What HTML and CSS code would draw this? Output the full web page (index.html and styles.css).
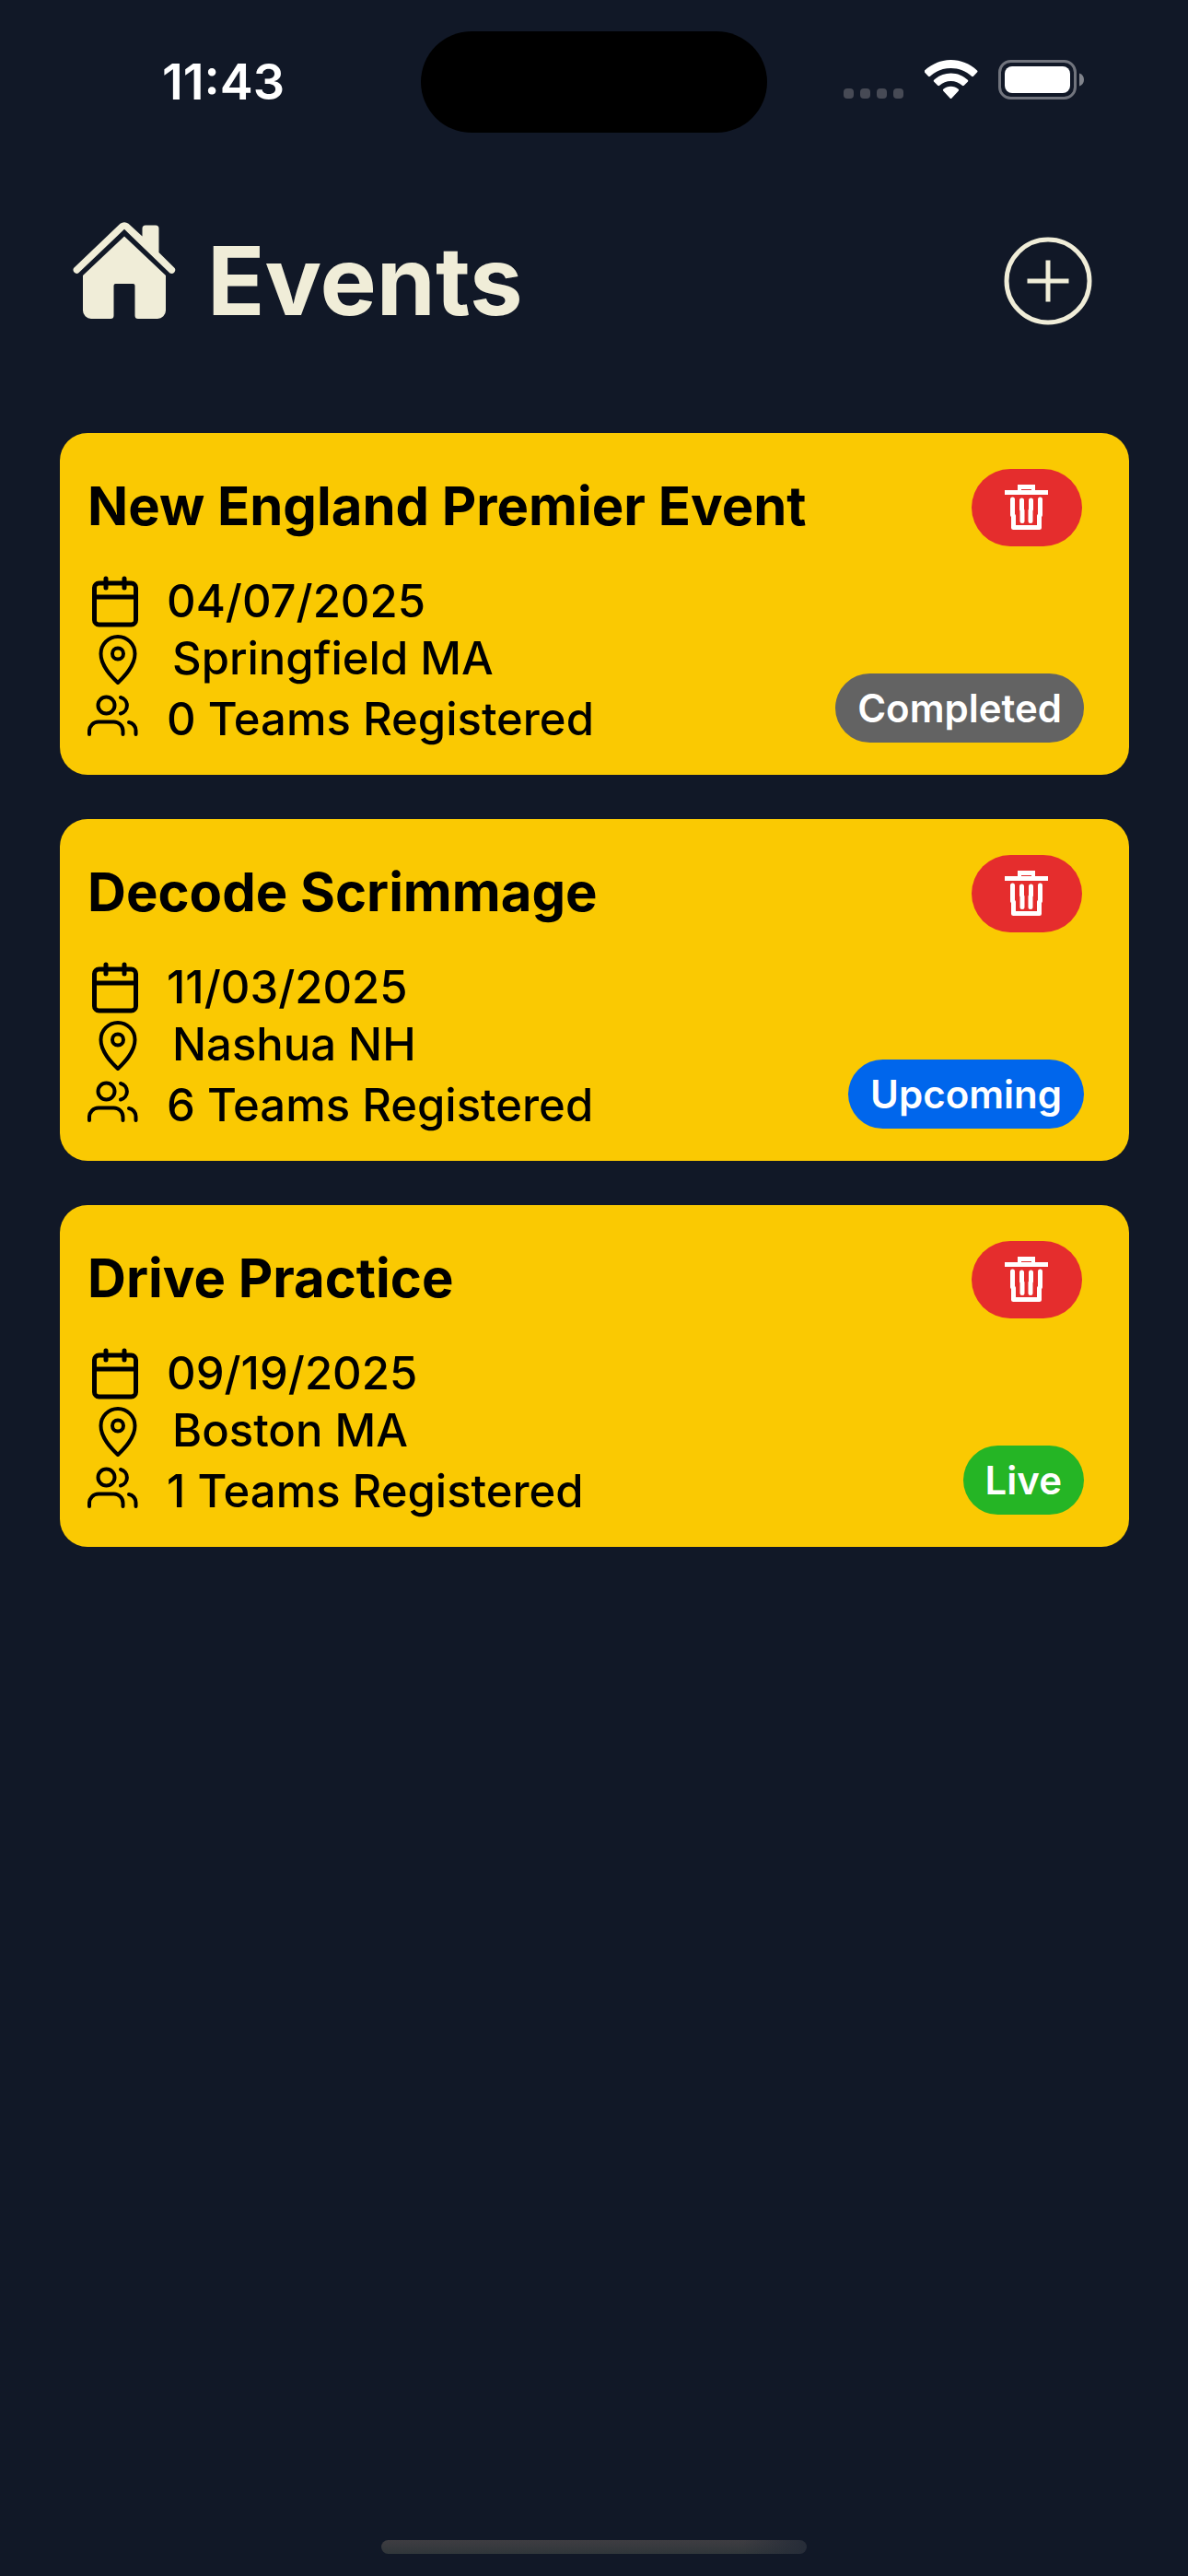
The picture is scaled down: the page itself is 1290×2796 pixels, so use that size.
FILE: index.html
```html
<!DOCTYPE html>
<html lang="en">
<head>
<meta charset="utf-8">
<meta name="viewport" content="width=device-width, initial-scale=1">
<title>Events</title>
<link rel="stylesheet" href="styles.css">
</head>
<body>
<svg class="sprite" aria-hidden="true">
  <symbol id="calendar" viewBox="0 0 24 24">
    <g fill="none" stroke="currentColor" stroke-width="2" stroke-linecap="round" stroke-linejoin="round">
      <rect x="3" y="4" width="18" height="18" rx="2"/>
      <path d="M16 2v4M8 2v4M3 10h18"/>
    </g>
  </symbol>
  <symbol id="pin" viewBox="0 -2 60 60">
    <g fill="none" stroke="currentColor" stroke-width="4" stroke-linejoin="round">
      <path d="M33 54C28 49 14.500 37 14.500 22.500a18.500 18.500 0 0 1 37 0C51.500 37 38 49 33 54z"/>
      <circle cx="33" cy="22.500" r="6"/>
    </g>
  </symbol>
  <symbol id="users" viewBox="0 3 60 60">
    <g fill="none" stroke="currentColor" stroke-width="4" stroke-linecap="round">
      <circle cx="20.500" cy="17.500" r="9"/>
      <path d="M2 49v-3a10 10 0 0 1 10-10.500h16a10 10 0 0 1 10.500 10.500v3"/>
      <path d="M36 9a9 9 0 0 1 0 17.500"/>
      <path d="M45 36a9 9 0 0 1 7.500 9v4"/>
    </g>
  </symbol>
  <symbol id="trash" viewBox="0 0 48 50">
    <path fill="currentColor" fill-rule="evenodd" d="M14 0h19v6h14v5H0V6h14zM18 5v1h11V5z"/>
    <g fill="none" stroke="currentColor" stroke-width="5" stroke-linecap="round" stroke-linejoin="round">
      <path d="M8.500 16v17l1 1v12.500h28V34l1-1V16"/>
      <path d="M18.500 17v10l.5 1v11.500M28.500 17v10l-.5 1v11.500"/>
    </g>
  </symbol>
</svg>

<header class="status">
  <time class="clock">11:43</time>
  <div class="island"></div>
  <div class="signals">
    <svg class="dots" viewBox="0 0 66 43" aria-hidden="true">
      <g fill="#474a55">
        <rect x="0" y="31" width="11" height="11" rx="4"/><rect x="18" y="31" width="11" height="11" rx="4"/><rect x="36" y="31" width="11" height="11" rx="4"/><rect x="54" y="31" width="11" height="11" rx="4"/>
      </g>
    </svg>
    <svg class="wifi" viewBox="0 0 58 43" aria-hidden="true">
      <g fill="#fff">
        <path d="M28.500 0C39 0 49 4 57 11.500q1 1 0 2L53 17.700q-1 .9-2 0C45 12 37 9 28.500 9S12 12 6 17.700q-1 .9-2 0L0 13.500q-1-1 0-2C8 4 18 0 28.500 0z"/>
        <path d="M28.500 14.500c7 0 13.500 2.800 18.300 7.300q1 1 0 2l-4 4q-1 .9-2 0c-3.500-3-7.600-4.800-12.300-4.800s-8.800 1.800-12.300 4.800q-1 .9-2 0l-4-4q-1-1 0-2c4.800-4.500 11.300-7.300 18.300-7.300z"/>
        <path d="M28.500 28.700c3 0 6 1 8.200 3q1 1 0 2l-7.200 7.800q-1 1-2 0l-7.200-7.800q-1-1 0-2c2.200-2 5.200-3 8.200-3z"/>
      </g>
    </svg>
    <svg class="battery" viewBox="0 0 94 43" aria-hidden="true">
      <rect x="1.500" y="1.500" width="82" height="40" rx="12" fill="none" stroke="#71747d" stroke-width="3"/>
      <rect x="7" y="7" width="71" height="29" rx="8" fill="#fff"/>
      <path fill="#81848c" d="M88 14.500c3 1 5 3.500 5 7s-2 6-5 7z"/>
    </svg>
  </div>
</header>

<main class="screen">
  <div class="topbar">
    <a class="home" href="#" aria-label="Home">
      <svg viewBox="0 0 112 106" aria-hidden="true">
        <g fill="#f0edd8">
          <path d="M56 15.500 101 58v38a9 9 0 0 1-9 9H71a3.500 3.500 0 0 1-3.500-3.500V69a2 2 0 0 0-2-2h-19a2 2 0 0 0-2 2v32.500a3.500 3.500 0 0 1-3.500 3.500H20a9 9 0 0 1-9-9V58z"/>
          <path d="M51.500 1.800a7 7 0 0 1 9 0L75.500 15.500V7a3.500 3.500 0 0 1 3.500-3.500h11A3.500 3.500 0 0 1 93.500 7v26l17.200 17a4 4 0 0 1-5.200 5.600L56 7.800 6 55.600A4 4 0 0 1 1 50z"/>
        </g>
      </svg>
    </a>
    <h1 class="heading">Events</h1>
    <button class="add" type="button" aria-label="Add event">
      <svg viewBox="0 0 96 96" aria-hidden="true">
        <g fill="none" stroke="#f0edd8" stroke-width="5"><circle cx="48" cy="48" r="45"/><path d="M48 25.500v45M25.500 48h45"/></g>
      </svg>
    </button>
  </div>

  <section class="events">
    <article class="card">
      <div class="card-head">
        <h2 class="name">New England Premier Event</h2>
        <button class="delete" type="button" aria-label="Delete New England Premier Event"><svg aria-hidden="true"><use href="#trash"/></svg></button>
      </div>
      <div class="card-body">
        <ul class="facts">
          <li><svg aria-hidden="true"><use href="#calendar"/></svg><span>04/07/2025</span></li>
          <li class="place"><svg aria-hidden="true"><use href="#pin"/></svg><span>Springfield MA</span></li>
          <li class="teams"><svg aria-hidden="true"><use href="#users"/></svg><span>0 Teams Registered</span></li>
        </ul>
        <span class="badge completed">Completed</span>
      </div>
    </article>
    <article class="card">
      <div class="card-head">
        <h2 class="name">Decode Scrimmage</h2>
        <button class="delete" type="button" aria-label="Delete Decode Scrimmage"><svg aria-hidden="true"><use href="#trash"/></svg></button>
      </div>
      <div class="card-body">
        <ul class="facts">
          <li><svg aria-hidden="true"><use href="#calendar"/></svg><span>11/03/2025</span></li>
          <li class="place"><svg aria-hidden="true"><use href="#pin"/></svg><span>Nashua NH</span></li>
          <li class="teams"><svg aria-hidden="true"><use href="#users"/></svg><span>6 Teams Registered</span></li>
        </ul>
        <span class="badge upcoming">Upcoming</span>
      </div>
    </article>
    <article class="card">
      <div class="card-head">
        <h2 class="name">Drive Practice</h2>
        <button class="delete" type="button" aria-label="Delete Drive Practice"><svg aria-hidden="true"><use href="#trash"/></svg></button>
      </div>
      <div class="card-body">
        <ul class="facts">
          <li><svg aria-hidden="true"><use href="#calendar"/></svg><span>09/19/2025</span></li>
          <li class="place"><svg aria-hidden="true"><use href="#pin"/></svg><span>Boston MA</span></li>
          <li class="teams"><svg aria-hidden="true"><use href="#users"/></svg><span>1 Teams Registered</span></li>
        </ul>
        <span class="badge live">Live</span>
      </div>
    </article>
  </section>
</main>
<footer class="indicator"></footer>
</body>
</html>
```
FILE: styles.css
```css
* {
  box-sizing: border-box;
}

body {
  margin: 0;
  min-height: 100vh;
  display: flex;
  flex-direction: column;
  background: #111827;
  color: #000;
  font-family: Inter, "Liberation Sans", sans-serif;
}

svg {
  display: block;
}

button {
  border: 0;
  padding: 0;
  background: none;
}

.sprite {
  position: absolute;
  width: 0;
  height: 0;
}

.status {
  display: grid;
  grid-template-columns: 1fr 376px 1fr;
  align-items: center;
  padding-top: 34px;
}

.clock {
  padding-left: 28px;
  text-align: center;
  color: #fff;
  font-size: 54px;
  line-height: 64px;
  font-weight: 600;
}

.island {
  height: 110px;
  border-radius: 55px;
  background: #000;
}

.signals {
  display: flex;
  justify-content: flex-end;
  padding: 0 112px 6px 0;
}

.dots {
  width: 66px;
  height: 43px;
}

.wifi {
  width: 58px;
  height: 43px;
  margin: 0 22px;
}

.battery {
  width: 94px;
  height: 43px;
}

.screen {
  flex: 1;
  padding: 88px 64px 0 65px;
}

.topbar {
  display: flex;
  align-items: center;
  height: 146px;
  padding: 0 40px 0 14px;
}

.home {
  padding-bottom: 22px;
}

.home svg {
  width: 112px;
  height: 106px;
}

.heading {
  flex: 1;
  margin: 0 0 0 34px;
  color: #f0edd8;
  font-size: 103px;
  line-height: 128px;
  font-weight: 700;
}

.add svg {
  width: 96px;
  height: 96px;
}

.events {
  display: flex;
  flex-direction: column;
  gap: 48px;
  padding-top: 92px;
}

.card {
  padding: 39px 49px 30px 30px;
  border-radius: 30px;
  background: #fac902;
}

.card-head {
  display: flex;
  align-items: center;
  justify-content: space-between;
  padding-right: 2px;
}

.name {
  margin: 0;
  padding-bottom: 4px;
  font-size: 58px;
  line-height: 72px;
  font-weight: 700;
}

.delete {
  display: flex;
  align-items: center;
  justify-content: center;
  width: 120px;
  height: 84px;
  border-radius: 42px;
  background: #e52d2d;
  color: #fff;
}

.delete svg {
  width: 48px;
  height: 50px;
}

.card-body {
  display: flex;
  align-items: flex-end;
  justify-content: space-between;
  padding-top: 30px;
}

.facts {
  margin: 0;
  padding: 0;
  list-style: none;
  font-size: 49px;
  line-height: 60px;
  font-weight: 500;
}

.facts li {
  display: flex;
  gap: 26px;
}

.facts .place {
  gap: 32px;
  padding-top: 2px;
}

.facts .teams {
  padding-top: 6px;
}

.facts svg {
  width: 60px;
  height: 60px;
}

.badge {
  margin-bottom: 5px;
  padding: 0 24px;
  border-radius: 38px;
  color: #fff;
  font-size: 42px;
  line-height: 75px;
  font-weight: 600;
}

.completed {
  background: #636363;
}

.upcoming {
  background: #0066ec;
}

.live {
  background: #25b525;
}

.indicator {
  align-self: center;
  width: 462px;
  height: 15px;
  margin-bottom: 24px;
  border-radius: 8px;
  background: linear-gradient(90deg, transparent 85%, #262c38), linear-gradient(#3e3d42, #30363a);
}
```
